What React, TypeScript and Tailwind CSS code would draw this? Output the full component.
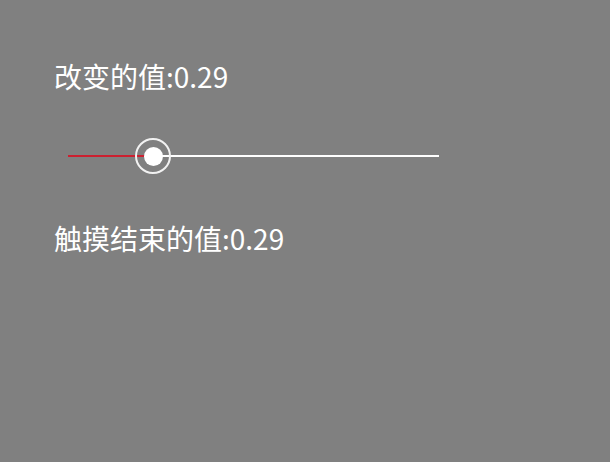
export default function App() {
  const value = 0.29;
  return (
    <div
      className="w-[610px] h-[462px] bg-[#808080] pl-[54px] pt-[62px] text-white"
      style={{ fontFamily: '"Noto Sans CJK SC", "Noto Sans", sans-serif' }}
    >
      <div className="text-[28px] leading-[28px]">改变的值:{value.toFixed(2)}</div>
      <div className="relative ml-[14px] mt-[49px] w-[371px] h-[34px] flex items-center">
        <div className="h-[2px] w-[86px] bg-[#cc2030]" />
        <div className="h-[2px] flex-1 bg-white" />
        <div className="absolute left-[67px] top-[-1px] w-[36px] h-[36px] rounded-full border-2 border-[#f2f2f2] flex items-center justify-center">
          <div className="w-[19px] h-[19px] rounded-full bg-white" />
        </div>
      </div>
      <div className="mt-[51px] text-[28px] leading-[28px]">触摸结束的值:{value.toFixed(2)}</div>
    </div>
  );
}
